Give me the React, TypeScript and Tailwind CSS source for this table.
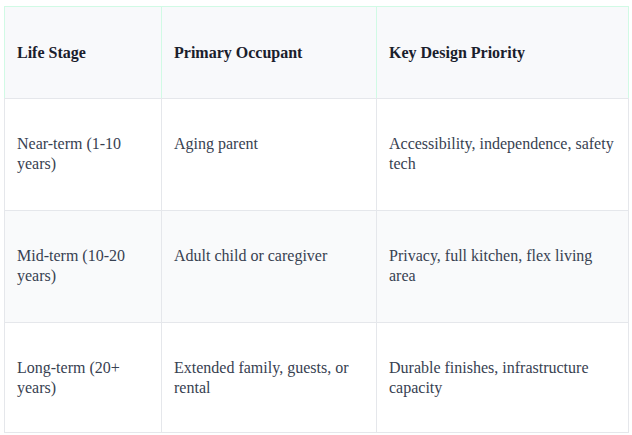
const rows = [
  ['Near-term (1-10 years)', 'Aging parent', 'Accessibility, independence, safety tech'],
  ['Mid-term (10-20 years)', 'Adult child or caregiver', 'Privacy, full kitchen, flex living area'],
  ['Long-term (20+ years)', 'Extended family, guests, or rental', 'Durable finishes, infrastructure capacity'],
]

export default function App() {
  return (
    <div className="min-h-screen bg-white pl-1 pt-1.5 font-['Liberation_Serif','DejaVu_Serif',Georgia,serif] text-[16px] leading-5">
      <table className="w-[624px] table-fixed border-collapse">
        <colgroup>
          <col className="w-[157px]" />
          <col className="w-[215px]" />
          <col className="w-[252px]" />
        </colgroup>
        <thead>
          <tr className="h-[92px] bg-[#f8f9fb]">
            {['Life Stage', 'Primary Occupant', 'Key Design Priority'].map((h) => (
              <th
                key={h}
                className="border border-[#d1fae5] border-b-[#e5e7eb] px-3 text-left font-bold text-[#1a202c]"
              >
                {h}
              </th>
            ))}
          </tr>
        </thead>
        <tbody>
          {rows.map((r, i) => (
            <tr key={i} className={i % 2 === 1 ? 'bg-[#f9fafb]' : 'bg-white'}>
              {r.map((c, j) => (
                <td
                  key={j}
                  className={`border border-[#e5e7eb] px-3 pt-[35px] align-top text-[#374151] ${i === rows.length - 1 ? 'pb-[34px]' : 'pb-[36px]'}`}
                >
                  {c}
                </td>
              ))}
            </tr>
          ))}
        </tbody>
      </table>
    </div>
  )
}
